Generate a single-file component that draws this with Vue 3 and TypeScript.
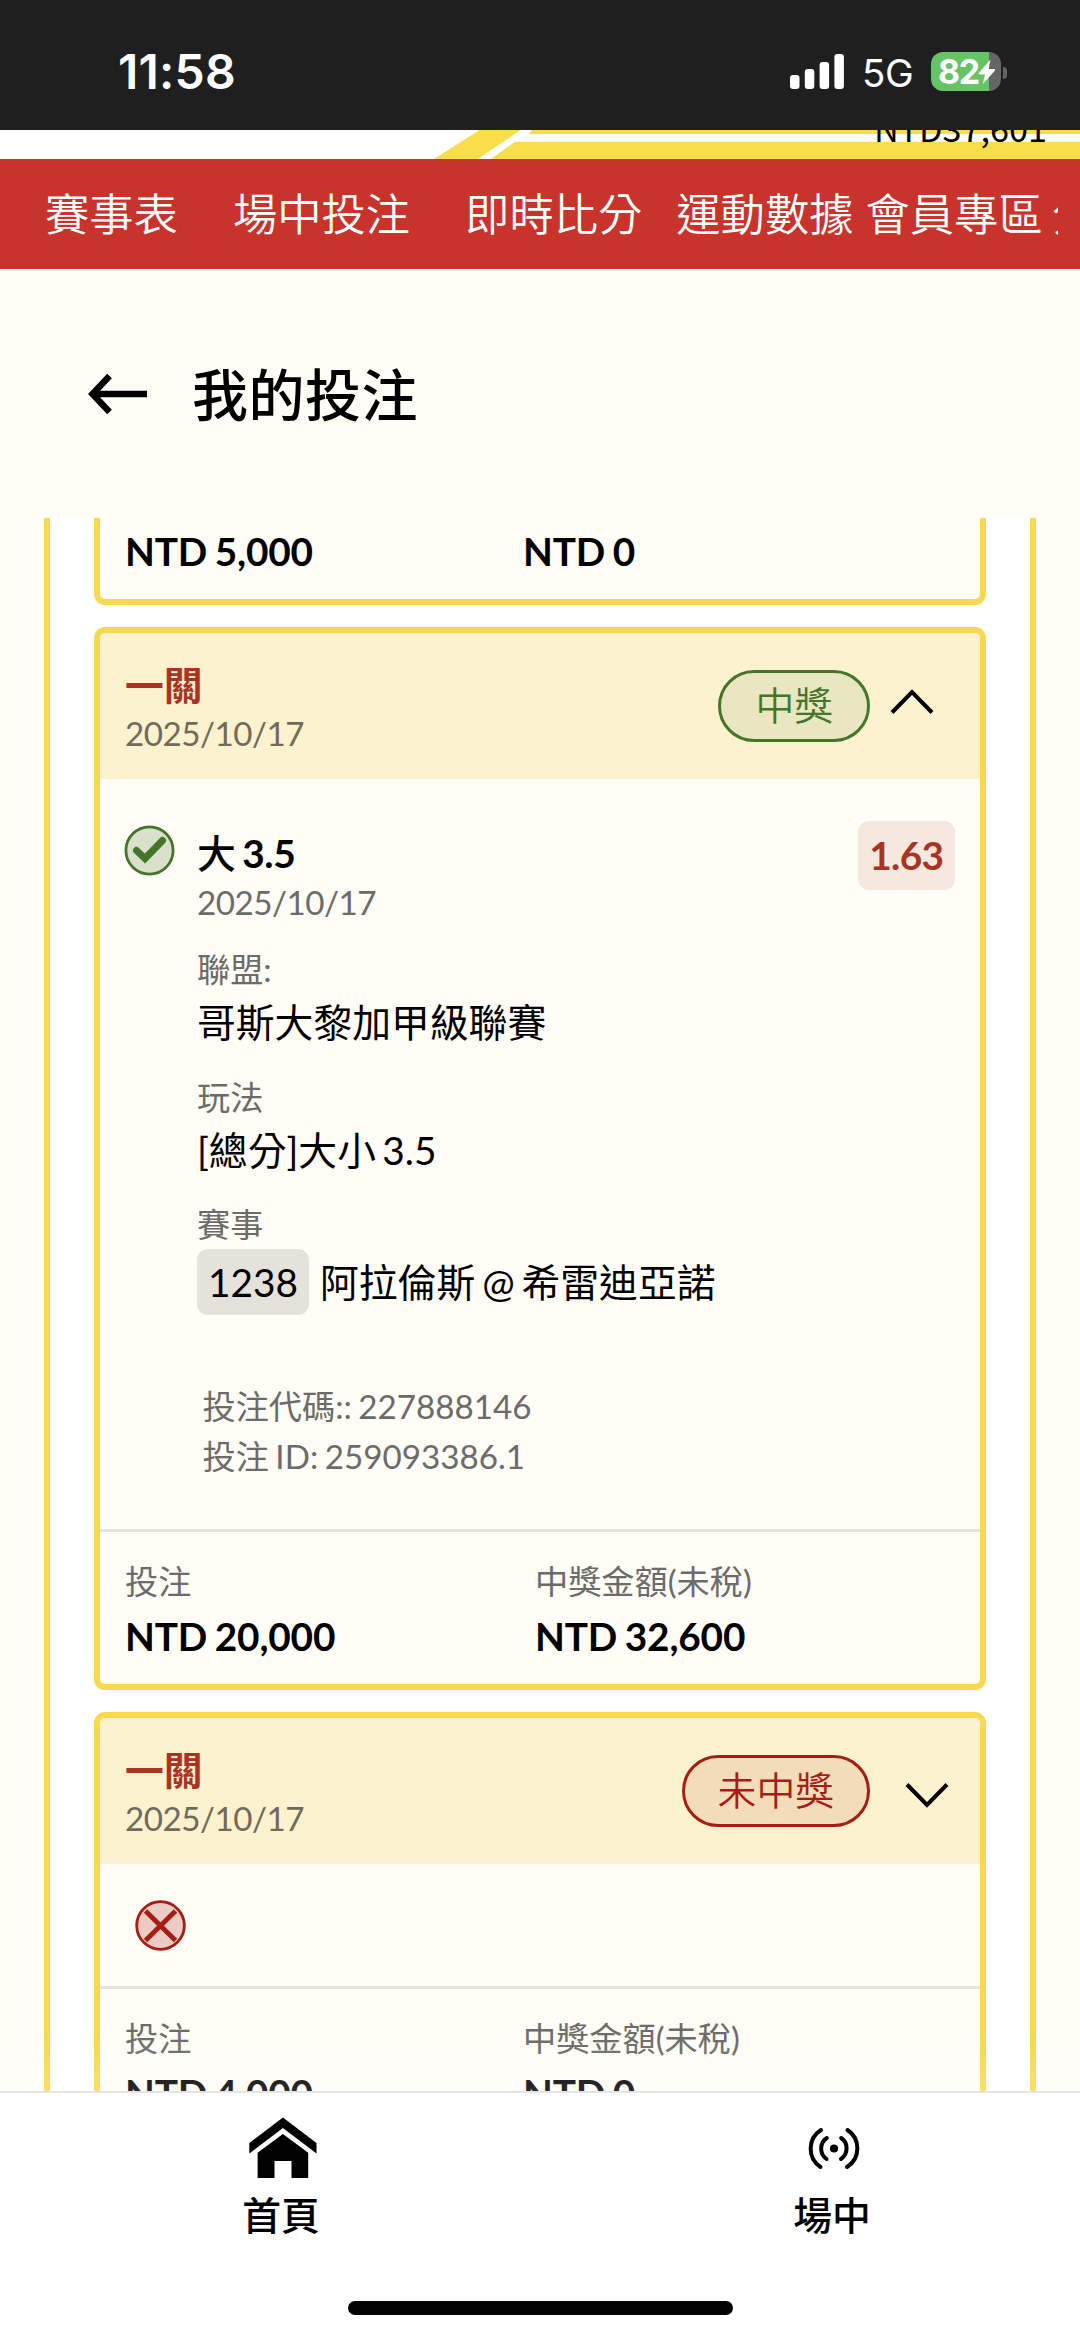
<script setup lang="ts">
interface Bet {
  id: number
  title: string
  date: string
  status: 'won' | 'lost'
  statusText: string
  expanded: boolean
  stake: string
  payout: string
}

const menu: string[] = ['賽事表', '場中投注', '即時比分', '運動數據', '會員專區', '分析']

const bets: Bet[] = [
  { id: 1, title: '一關', date: '2025/10/17', status: 'won', statusText: '中獎', expanded: true, stake: 'NTD 20,000', payout: 'NTD 32,600' },
  { id: 2, title: '一關', date: '2025/10/17', status: 'lost', statusText: '未中獎', expanded: false, stake: 'NTD 4,000', payout: 'NTD 0' },
]
</script>

<template>
  <div class="screen">
    <div class="status">
      <span class="clock">11:58</span>
      <div class="indicators">
        <svg class="signal" width="54" height="35" viewBox="0 0 54 35">
          <rect x="0" y="21" width="9.5" height="14" rx="3" />
          <rect x="14.8" y="15" width="9.5" height="20" rx="3" />
          <rect x="29.6" y="8" width="9.5" height="27" rx="3" />
          <rect x="44.4" y="0" width="9.5" height="35" rx="3" />
        </svg>
        <span class="network">5G</span>
        <div class="battery">
          <span class="level">82</span>
          <svg class="bolt" width="18" height="26" viewBox="0 0 18 26">
            <path d="M12.5 .5 L.8 14 Q.2 15.4 1.6 15.4 H7 L4.7 25.2 L17 11.4 Q17.6 10 16.2 10 H10.6 Z" />
          </svg>
        </div>
        <span class="nub"></span>
      </div>
    </div>

    <div class="strip">
      <svg width="1080" height="29" viewBox="0 0 1080 29">
        <path d="M479.500 0 H520.500 L478 29 H434 Z" />
        <path d="M532 0 H1080 V4 H528.500 Z" />
        <path d="M515 11.700 H1080 V29 H491 Z" />
      </svg>
      <span class="balance">NTD37,601</span>
    </div>

    <nav class="menu">
      <span v-for="(item, i) in menu" :key="item" :class="['menu-item', `m${i}`]">{{ item }}</span>
    </nav>

    <header class="heading">
      <svg width="60" height="42" viewBox="0 0 60 42">
        <path d="M21.500 3 L4.500 21 L21.500 39 M5 21 H59" fill="none" stroke="#000" stroke-width="6.500" />
      </svg>
      <h1>我的投注</h1>
    </header>

    <main class="list">
      <div class="panel">
        <section class="card tail">
          <div class="totals">
            <div class="col"><b>NTD 5,000</b></div>
            <div class="col"><b>NTD 0</b></div>
          </div>
        </section>

        <section v-for="bet in bets" :key="bet.id" :class="['card', { open: bet.expanded }]">
          <div class="card-head">
            <div class="card-title">
              <strong>{{ bet.title }}</strong>
              <span>{{ bet.date }}</span>
            </div>
            <span :class="['pill', bet.status]">{{ bet.statusText }}</span>
            <svg class="chevron" width="44" height="26" viewBox="0 0 44 26">
              <path :d="bet.expanded ? 'M2 23.500 L22 3 L42 23.500' : 'M2 2.500 L22 23 L42 2.500'" />
            </svg>
          </div>

          <div v-if="bet.expanded" class="detail">
            <svg class="mark" width="51" height="51" viewBox="0 0 51 51">
              <circle cx="25.500" cy="25.500" r="23.600" fill="#d9e1cd" stroke="#447529" stroke-width="2.800" />
              <path d="M12.500 25.500 L21 33.500 L38.500 15.500" fill="none" stroke="#447529" stroke-width="7" stroke-linecap="round" />
            </svg>
            <div class="info">
              <div class="pick"><span class="side">大</span> 3.5</div>
              <div class="when">2025/10/17</div>
              <div class="label">聯盟:</div>
              <div class="value">哥斯大黎加甲級聯賽</div>
              <div class="label next">玩法</div>
              <div class="value">[總分]大小 3.5</div>
              <div class="label next">賽事</div>
              <div class="match"><span class="code">1238</span><span>阿拉倫斯 @ 希雷迪亞諾</span></div>
              <div class="refs">
                <div>投注代碼:: 227888146</div>
                <div>投注 ID: 259093386.1</div>
              </div>
            </div>
            <span class="odds">1.63</span>
          </div>

          <div v-else class="brief">
            <svg width="51" height="51" viewBox="0 0 51 51">
              <circle cx="25.500" cy="25.500" r="23.800" fill="#eccbc5" stroke="#a51d14" stroke-width="2.800" />
              <path d="M10.500 11 L40.500 40.500 M40.500 11 L10.500 40.500" stroke="#a51d14" stroke-width="4.800" />
            </svg>
          </div>

          <div class="totals ruled">
            <div class="col"><span>投注</span><b>{{ bet.stake }}</b></div>
            <div class="col"><span>中獎金額(未稅)</span><b>{{ bet.payout }}</b></div>
          </div>
        </section>
      </div>
      <div class="fade"></div>
    </main>

    <footer class="tabs">
      <div class="tab-row">
        <div class="tab home">
          <svg width="68" height="62" viewBox="0 0 68 62">
            <path d="M33.900 .5 L67.500 26 V36.500 L33.900 11 L.3 36.500 V26 Z" />
            <path d="M33.900 17 L59.200 35.700 V61 H42.500 V44 H25.500 V61 H8.600 V35.700 Z" />
          </svg>
          <span>首頁</span>
        </div>
        <div class="tab live">
          <svg width="52" height="62" viewBox="0 0 52 62">
            <g fill="none" stroke="#000" stroke-width="4" stroke-linecap="round">
              <path d="M13 13 A22 22 0 0 0 12.500 50" />
              <path d="M39.500 13 A22 22 0 0 1 39 50" />
              <path d="M18.800 21 A12.800 12.800 0 0 0 18.500 42" />
              <path d="M33.200 21 A12.800 12.800 0 0 1 33 42" />
            </g>
            <circle cx="26" cy="31.500" r="4.100" />
          </svg>
          <span>場中</span>
        </div>
      </div>
      <div class="home-bar"></div>
    </footer>
  </div>
</template>

<style>
html,
body {
  margin: 0;
  background: #fffdf6;
}
</style>

<style scoped>
.screen {
  width: 1080px;
  height: 2337px;
  overflow: hidden;
  display: flex;
  flex-direction: column;
  background: #fffdf6;
  color: #000;
  font-family: Lato, "Noto Sans CJK TC", sans-serif;
  font-size: 38.8px;
}
svg {
  display: block;
  flex: none;
}

/* status bar */
.status {
  flex: none;
  height: 130px;
  box-sizing: border-box;
  padding: 15px 73px 0 118px;
  display: flex;
  align-items: center;
  justify-content: space-between;
  background: #1f1f1f;
  color: #fff;
  font-family: Inter, sans-serif;
}
.clock {
  font-size: 48px;
  font-weight: 600;
  line-height: 58px;
  height: 60px;
  letter-spacing: 0.2px;
}
.indicators {
  display: flex;
  align-items: center;
  height: 60px;
}
.signal {
  fill: #fff;
  margin-top: -2px;
}
.network {
  margin-left: 18px;
  width: 69px;
  font-size: 38.5px;
  line-height: 60px;
  letter-spacing: -0.5px;
}
.battery {
  width: 70px;
  height: 39px;
  margin-top: -2px;
  border-radius: 12px;
  display: flex;
  align-items: center;
  box-sizing: border-box;
  padding-left: 7px;
  background: linear-gradient(90deg, #65c466 58px, #656565 58px);
}
.level {
  width: 40px;
  font-size: 34px;
  font-weight: 700;
  line-height: 39px;
  letter-spacing: -1.5px;
}
.bolt {
  fill: #fff;
}
.nub {
  width: 4px;
  height: 12px;
  margin-left: 2px;
  border-radius: 0 5px 5px 0;
  background: #656565;
}

/* page banner peeking out below the status bar */
.strip {
  position: relative;
  flex: none;
  height: 29px;
  overflow: hidden;
  background: #fff;
}
.strip path {
  fill: #f9dd4a;
}
.balance {
  position: absolute;
  right: 33px;
  bottom: 12px;
  font-family: "Noto Sans CJK TC", sans-serif;
  font-size: 34.200px;
  line-height: 40px;
}

.menu {
  flex: none;
  height: 110px;
  box-sizing: border-box;
  padding-left: 45px;
  padding-bottom: 4px;
  border-right: 22px solid #c8342b;
  display: flex;
  align-items: center;
  overflow: hidden;
  background: #c8342b;
  color: #fff;
  font-size: 44.300px;
  font-weight: 350;
  white-space: nowrap;
}
.menu-item {
  flex: none;
}
.m1,
.m2 {
  margin-left: 55px;
}
.m3 {
  margin-left: 34px;
}
.m4 {
  margin-left: 12px;
}
.m5 {
  margin-left: 9px;
}

.heading {
  flex: none;
  height: 249px;
  padding-left: 88px;
  display: flex;
  align-items: center;
  gap: 44px;
}
.heading h1 {
  margin: 2px 0 0;
  font-size: 56px;
  line-height: 80px;
  font-weight: 500;
  letter-spacing: 0.5px;
}

/* list of bets */
.list {
  position: relative;
  flex: none;
  height: 1573px;
  overflow: hidden;
}
.panel {
  box-sizing: border-box;
  height: 1700px;
  margin: 0 44px;
  padding: 0 44px;
  border: solid #f8d850;
  border-width: 0 6px;
  background: #fff;
}
.card {
  margin-bottom: 22px;
  border: 6px solid #f8d850;
  border-radius: 11px;
  background: #fffdf6;
}
.card.tail {
  border-top: 0;
  border-radius: 0 0 11px 11px;
}
.card-head {
  height: 146px;
  display: flex;
  align-items: center;
  background: #fdf2ce;
  border-radius: 5px 5px 0 0;
}
.card-title {
  flex: 1;
  padding: 6px 0 0 25px;
  display: flex;
  flex-direction: column;
  line-height: 48px;
}
.card-title strong {
  color: #aa3424;
  font-weight: 700;
}
.card-title span {
  color: #6f6b5b;
  font-size: 33.200px;
  letter-spacing: -0.5px;
}
.pill {
  box-sizing: border-box;
  height: 72px;
  padding: 0 34px;
  border: 3px solid;
  border-radius: 36px;
  line-height: 65px;
  font-weight: 350;
}
.pill.won {
  color: #447529;
  background: #e9e7bf;
}
.pill.lost {
  padding: 0 33px;
  color: #a51d14;
  background: #f3dcb9;
}
.chevron {
  margin: 7px 31px 0 35px;
  fill: none;
  stroke: #000;
  stroke-width: 4;
}
.open .chevron {
  margin: 0 46px 8px 20px;
}
.detail {
  height: 750px;
  display: flex;
  align-items: flex-start;
}
.mark {
  margin: 46px 0 0 24px;
}
.info {
  flex: 1;
  padding: 50px 0 0 22px;
}
.pick {
  line-height: 49px;
  font-weight: 700;
  word-spacing: -2.5px;
  letter-spacing: -0.3px;
}
.side {
  font-weight: 500;
}
.when {
  line-height: 49px;
  font-size: 33.200px;
  letter-spacing: -0.5px;
  color: #6b6b69;
}
.label {
  margin-top: 20px;
  line-height: 44px;
  font-size: 33.200px;
  color: #6b6b69;
}
.label.next {
  margin-top: 20.500px;
}
.value {
  line-height: 63px;
  word-spacing: -3.5px;
}
.match {
  margin-top: 3px;
  display: flex;
  align-items: center;
  gap: 11px;
  line-height: 66px;
  word-spacing: -3px;
}
.code {
  padding: 0 11px;
  border-radius: 11px;
  background: #e5e2dc;
}
.refs {
  padding: 66px 0 0 5.500px;
  font-size: 33.200px;
  line-height: 50px;
  word-spacing: -2px;
  color: #6b6b69;
}
.odds {
  margin: 42px 25px 0 0;
  padding: 0 11.500px;
  border-radius: 11px;
  background: #f4e8df;
  color: #aa3424;
  font-weight: 700;
  line-height: 69px;
  letter-spacing: -0.6px;
}
.brief {
  height: 122px;
  box-sizing: border-box;
  padding: 36px 0 0 35px;
}
.totals {
  display: flex;
  padding: 3px 0 18px 25px;
}
.totals.ruled {
  padding-top: 24px;
  border-top: 3px solid #e6e3de;
}
.col {
  width: 398px;
  display: flex;
  flex-direction: column;
}
.open .col {
  width: 410px;
}
.col span {
  font-size: 33.200px;
  line-height: 50px;
  color: #6b6b69;
}
.col b {
  line-height: 60px;
  font-weight: 700;
  word-spacing: -1.5px;
  letter-spacing: -0.2px;
}
.fade {
  position: absolute;
  left: 0;
  right: 0;
  bottom: 0;
  height: 60px;
  background: linear-gradient(rgba(255, 255, 255, 0), rgba(255, 255, 255, 0.16));
}

/* bottom tabs */
.tabs {
  flex: 1;
  border-top: 2px solid #e4e4e4;
  background: #fff;
}
.tab-row {
  display: flex;
  height: 208px;
}
.tab {
  flex: none;
  padding-top: 24px;
  display: flex;
  flex-direction: column;
  align-items: center;
  font-weight: 500;
}
.tab span {
  margin: 11px 3px 0 0;
  line-height: 50px;
}
.home {
  width: 565px;
}
.live {
  width: 515px;
  box-sizing: border-box;
  padding-left: 22px;
}
.home-bar {
  width: 385px;
  height: 14px;
  margin: 0 auto;
  border-radius: 7px;
  background: #000;
}
</style>
